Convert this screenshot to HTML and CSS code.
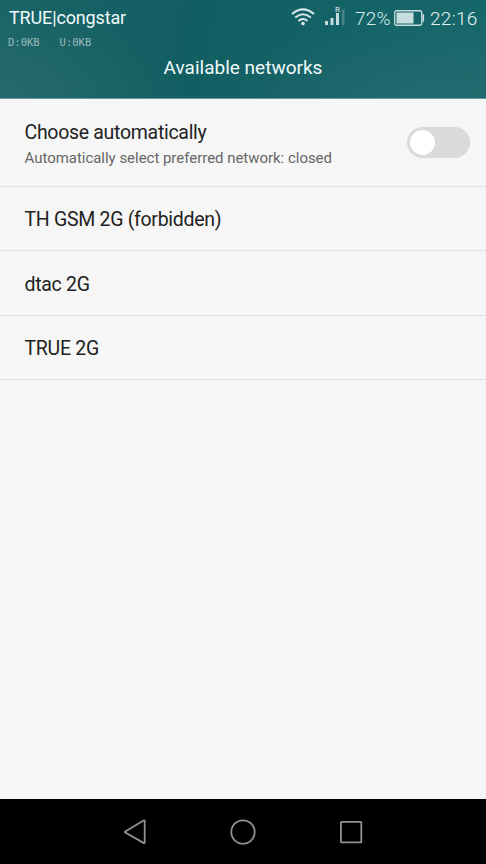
FILE: index.html
```html
<!DOCTYPE html>
<html lang="en">
<head>
<meta charset="utf-8">
<title>Available networks</title>
<link rel="stylesheet" href="styles.css">
</head>
<body>
<div class="screen">
  <header class="header">
    <div class="status">
      <span class="carrier">TRUE|congstar</span>
      <svg class="wifi" width="24" height="18" viewBox="0 0 24 18" fill="none" stroke="currentColor" stroke-width="2">
        <path d="M1 6.1Q12 -3.3 23 6.1M4.2 9.6Q12 2.9 19.8 9.6M7.5 12.9Q12 9 16.5 12.9"/>
        <circle cx="12" cy="15.6" r="1.8" fill="currentColor" stroke="none"/>
      </svg>
      <svg class="signal" width="20" height="30" viewBox="0 -7 20 30" fill="currentColor">
        <path d="M0 14h3v4H0zM5.5 11h3v7h-3zM11 6h3V18h-3z"/>
        <path d="M17 2.5h2.5V18H17z" opacity=".28"/>
        <text class="roam" x="10" y="4.5">R</text>
      </svg>
      <span class="percent">72%</span>
      <svg class="battery" width="31" height="16" viewBox="0 0 31 16">
        <rect x=".75" y=".75" width="27" height="14.5" rx="1.8" fill="none" stroke="currentColor" stroke-width="1.3"/>
        <rect x="2.5" y="2.5" width="17" height="11" fill="currentColor"/>
        <path d="M28.5 4.2h.6q1 0 1 1v5.6q0 1-1 1h-.6z" fill="currentColor"/>
      </svg>
      <span class="clock">22:16</span>
    </div>
    <div class="traffic"><span>D:0KB</span><span>U:0KB</span></div>
    <h1 class="title">Available networks</h1>
  </header>
  <main class="list">
    <section class="row row-auto">
      <div class="labels">
        <div class="name">Choose automatically</div>
        <div class="summary">Automatically select preferred network: closed</div>
      </div>
      <div class="switch"><div class="knob"></div></div>
    </section>
    <div class="row"><span class="name">TH GSM 2G (forbidden)</span></div>
    <div class="row"><span class="name">dtac 2G</span></div>
    <div class="row"><span class="name">TRUE 2G</span></div>
  </main>
  <nav class="nav">
    <svg width="26" height="28" viewBox="0 0 26 28"><path d="M22.7 2.8V24.2Q22.7 25.6 21.5 24.9L3.3 14.6Q2.4 14 3.3 13.4L21.5 2.6Q22.7 2 22.7 2.8Z"/></svg>
    <svg width="26" height="28" viewBox="0 0 26 28"><circle cx="13" cy="14" r="11.7"/></svg>
    <svg width="26" height="28" viewBox="0 0 26 28"><rect x="2.9" y="3.9" width="20.4" height="20.4" rx=".6"/></svg>
  </nav>
</div>
</body>
</html>
```
FILE: styles.css
```css
* { box-sizing: border-box; }
body { margin: 0; font-family: Roboto, sans-serif; background: #f6f6f6; }
.screen { width: 486px; height: 864px; display: flex; flex-direction: column; }
.header {
  height: 99px;
  flex: none;
  color: #effafa;
  border-bottom: 1px solid #64989a;
  background:
    radial-gradient(ellipse 190px 90px at 0 100%, rgba(48, 110, 114, .55), transparent),
    radial-gradient(ellipse 230px 85px at 90% 105%, rgba(48, 110, 118, .55), transparent),
    linear-gradient(100deg, #1b6468, #125e62 38%, #146367 70%, #17686a);
}
.status { height: 36px; padding: 0 8px 0 9px; display: flex; align-items: center; white-space: nowrap; }
.carrier { width: 282px; font-size: 18px; line-height: 36px; letter-spacing: -.15px; }
.wifi { margin-top: -2px; color: #d5e7e8; flex: none; }
.signal { margin: -6px 0 0 10px; color: #c5dcdd; flex: none; }
.roam { font-size: 8px; font-weight: 500; }
.percent { width: 38.5px; margin-left: 10px; font-size: 19px; font-weight: 300; letter-spacing: .2px; color: #d9ebec; }
.battery { margin-top: -1px; color: #c8dedf; flex: none; }
.clock { margin-left: 5.5px; font-size: 19px; font-weight: 300; letter-spacing: .3px; color: #e6f3f3; }
.traffic { height: 13px; padding-left: 8px; display: flex; gap: 20px; font: 10.5px/13px "DejaVu Sans Mono", monospace; color: #9bbabb; }
.title { margin: 0; height: 37px; font-size: 19px; line-height: 37px; font-weight: 400; text-align: center; }
.list { flex: 1; background: #f6f6f6; color: #222; }
.row { height: 64.4px; padding: 3px 16px 0 24.5px; display: flex; align-items: center; border-bottom: 1px solid #e1e1e1; white-space: nowrap; }
.row-auto { height: 88px; padding-top: 0; justify-content: space-between; }
.labels { padding-top: 3px; }
.name { font-size: 19.5px; line-height: 26px; letter-spacing: -.3px; }
.summary { font-size: 14.95px; line-height: 20px; margin-top: 2px; color: #666; }
.switch { width: 63px; height: 31px; padding: 3px; border-radius: 16px; background: #dadada; }
.knob { width: 25px; height: 25px; border-radius: 50%; background: #fff; }
.nav { height: 65px; flex: none; background: #000; display: flex; justify-content: center; align-items: center; gap: 82px; }
.nav svg { fill: none; stroke: #929292; stroke-width: 1.8; }
```
